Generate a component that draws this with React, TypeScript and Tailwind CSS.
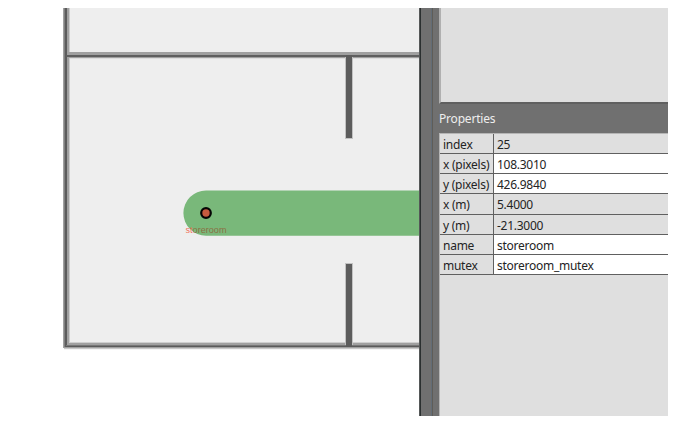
const rows = [
  { label: "index", value: "25", editable: false, h: "h-[20px]" },
  { label: "x (pixels)", value: "108.3010", editable: true, h: "h-[20px]" },
  { label: "y (pixels)", value: "426.9840", editable: true, h: "h-[20px]" },
  { label: "x (m)", value: "5.4000", editable: false, h: "h-[21px]" },
  { label: "y (m)", value: "-21.3000", editable: false, h: "h-[20px]" },
  { label: "name", value: "storeroom", editable: true, h: "h-[20px]" },
  { label: "mutex", value: "storeroom_mutex", editable: true, h: "h-[20px]" },
];

function FloorPlan() {
  return (
    <svg width="356" height="342" viewBox="63 8 356 342" className="block shrink-0" shapeRendering="crispEdges">
      <rect x="65" y="8" width="354" height="339" fill="#eeeeee" />
      {/* outer walls */}
      <rect x="63" y="8" width="6" height="340" fill="#a0a0a0" />
      <rect x="69" y="8" width="1" height="340" fill="#cbcbcb" />
      <rect x="63" y="52" width="356" height="6" fill="#a0a0a0" />
      <rect x="70" y="58" width="349" height="1" fill="#dedede" />
      <rect x="69" y="342" width="350" height="1" fill="#cfcfcf" />
      <rect x="65" y="343" width="354" height="5" fill="#a0a0a0" />
      <rect x="64" y="348" width="355" height="1" fill="#c8c8c8" />
      <rect x="64" y="349" width="355" height="1" fill="#f4f4f4" />
      <rect x="64" y="8" width="1" height="339" fill="#808080" />
      <rect x="65" y="8" width="2" height="339" fill="#5c5c5c" />
      <rect x="66" y="55" width="353" height="2" fill="#5f5f5f" />
      <rect x="66" y="346" width="353" height="1" fill="#5a5a5a" />
      <rect x="66" y="345" width="353" height="1" fill="#777777" />
      {/* inner partitions */}
      <rect x="345" y="57" width="8" height="82" fill="#c2c2c2" />
      <rect x="346" y="55" width="6" height="83" fill="#5c5c5c" />
      <rect x="345" y="263" width="8" height="82" fill="#c2c2c2" />
      <rect x="346" y="264" width="6" height="82" fill="#5c5c5c" />
      {/* lane ending at the storeroom vertex */}
      <path d="M419 190.5H206a22.6 22.6 0 0 0 0 45.2h213z" fill="#79b87a" shapeRendering="auto" />
      <circle cx="206" cy="213" r="4.8" fill="#c55b3f" stroke="#050505" strokeWidth="2.2" shapeRendering="auto" />
      <text x="185.5" y="233" fontSize="9" textLength="41" lengthAdjust="spacingAndGlyphs" fill="#8f6038" fillOpacity="0.85" fontFamily="'Liberation Sans', Arial, sans-serif">
        <tspan fill="#f05a40">st</tspan>oreroom
      </text>
    </svg>
  );
}

function Splitter() {
  return (
    <div className="flex w-5 shrink-0 bg-[#707070]">
      <div className="w-px bg-[#555858]" />
      <div className="w-px bg-[#2b3030]" />
      <div className="w-[10px]" />
      <div className="w-px bg-[#626c76]" />
      <div className="w-px bg-[#5f5d58]" />
    </div>
  );
}

function PropertiesTable() {
  return (
    <div className="flex h-[283px] flex-col border-l border-t border-[#b5b5b5] bg-[#dfdfdf]">
      {rows.map((row) => (
        <div key={row.label} className={`flex shrink-0 border-b border-[#606060] text-[12px] leading-[21px] tracking-[-0.26px] text-[#242424] ${row.h}`}>
          <div className="w-[54px] shrink-0 whitespace-nowrap border-r border-[#606060] bg-[#dfdfdf] pl-[3px]">{row.label}</div>
          <div className={`grow pl-[3px] ${row.editable ? "bg-white" : "bg-[#dfdfdf]"}`}>{row.value}</div>
        </div>
      ))}
    </div>
  );
}

export default function App() {
  return (
    <div className="flex h-[425px] w-[681px] overflow-hidden bg-white pl-[63px] pt-2 font-['Noto_Sans','Open_Sans',sans-serif]">
      <FloorPlan />
      <div className="flex h-[408px] w-[249px] shrink-0">
        <Splitter />
        <div className="flex w-[229px] flex-col bg-[#707070]">
          <div className="h-[96px] border-b-2 border-l-2 border-b-[#606060] border-l-[#b0b0b0] bg-[#dfdfdf]" />
          <div className="h-[29px] text-[12px] leading-[29px] tracking-[-0.2px] text-[#eeeeee]">Properties</div>
          <PropertiesTable />
        </div>
      </div>
    </div>
  );
}
